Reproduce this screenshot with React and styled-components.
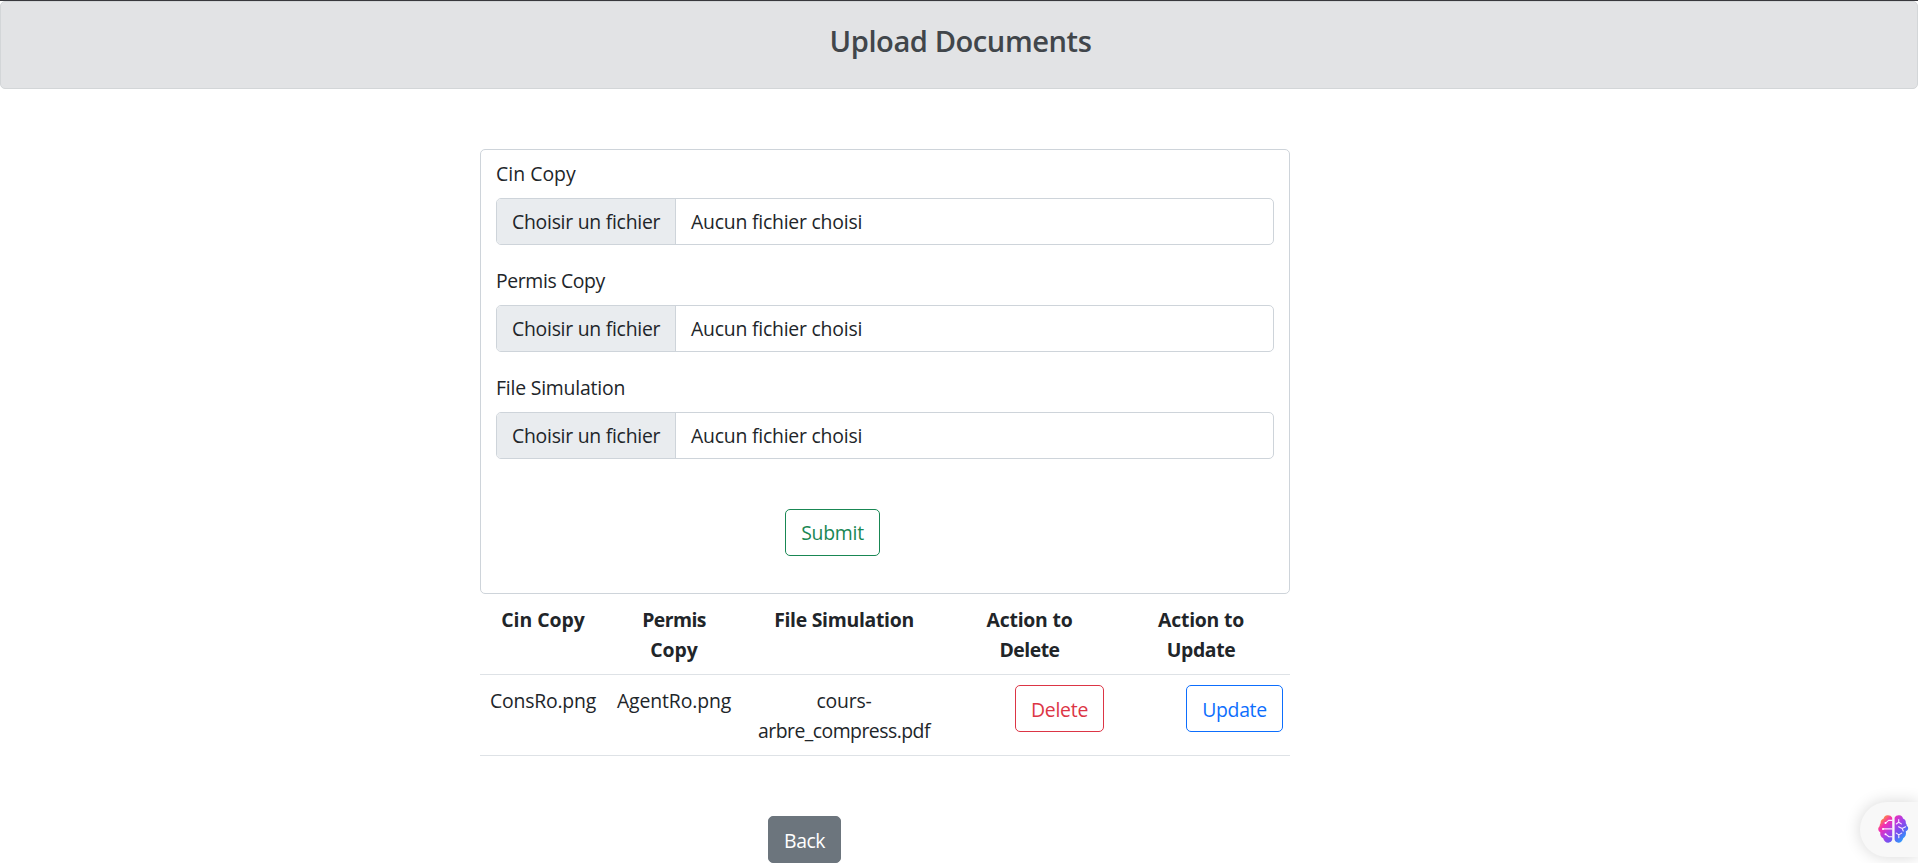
import React from 'react';
import styled, { createGlobalStyle } from 'styled-components';

const GlobalStyle = createGlobalStyle`
  *, *::before, *::after { box-sizing: border-box; }
  body {
    margin: 0;
    background: #fff;
    color: #212529;
    font-family: 'Segoe UI', 'Open Sans', 'Noto Sans', sans-serif;
    font-size: 19.4px;
    line-height: 30px;
  }
`;

const Page = styled.div`
  height: 863px;
  overflow: hidden;
  border-top: 1px solid #38383d;
`;

const Banner = styled.header`
  height: 88px;
  padding: 21px 18px 0 21px;
  border: 1px solid #d3d6d8;
  border-radius: 5px;
  background: #e2e3e5;
  color: #41464b;
  text-align: center;
`;

const Title = styled.h4`
  margin: 0;
  font-size: 29.1px;
  font-weight: 600;
  line-height: 36px;
  letter-spacing: -0.44px;
`;

const Main = styled.main`
  display: flex;
  flex-direction: column;
  width: 810px;
  margin: 60px 0 0 480px;
`;

const Text = styled.span`
  letter-spacing: ${(p) => p.$track || 0}px;
  white-space: nowrap;
`;

const UploadForm = styled.form`
  display: flex;
  flex-direction: column;
  gap: 20px;
  height: 445px;
  padding: 8px 15px;
  border: 1px solid #ced4da;
  border-radius: 5px;
`;

const Field = styled.div`
  display: flex;
  flex-direction: column;
  gap: 10px;
`;

const Label = styled.label`
  height: 30px;
  padding-top: 1px;
`;

const FileInput = styled.div`
  display: flex;
  height: 47px;
  overflow: hidden;
  border: 1px solid #ced4da;
  border-radius: 5px;
`;

const FileButton = styled.span`
  width: 179px;
  padding: 8px 0 0 15px;
  border-right: 1px solid #ced4da;
  background: #e9ecef;
`;

const FileName = styled.span`
  padding: 8px 15px 0;
`;

const palette = {
  success: ['#198754', 'transparent', '#198754'],
  danger: ['#dc3545', 'transparent', '#dc3545'],
  primary: ['#0d6efd', 'transparent', '#0d6efd'],
  secondary: ['#fff', '#6c757d', '#6c757d'],
};

const Button = styled.button`
  flex: none;
  width: ${(p) => p.$width}px;
  height: 47px;
  padding: ${(p) => (p.$low ? 3 : 1)}px 0 0;
  border: 1px solid ${(p) => palette[p.$variant][2]};
  border-radius: 5px;
  background: ${(p) => palette[p.$variant][1]};
  color: ${(p) => palette[p.$variant][0]};
  font: inherit;
  line-height: 30px;
`;

const SubmitRow = styled.div`
  display: flex;
  padding: 30px 0 0 289px;
`;

const Table = styled.table`
  width: 810px;
  table-layout: fixed;
  border-collapse: separate;
  border-spacing: 0;
  text-align: center;
`;

const Col = styled.col`
  width: ${(p) => p.$width}px;
`;

const HeadCell = styled.th`
  height: 81px;
  padding: 11px 1px 9px 0;
  border-bottom: 1px solid #dee2e6;
  font-weight: 700;
  vertical-align: top;
`;

const Line = styled(Text)`
  display: block;
`;

const Cell = styled.td`
  height: 81px;
  padding: 11px 1px 9px 0;
  border-bottom: 1px solid #dee2e6;
  vertical-align: top;
`;

const ActionCell = styled(Cell)`
  padding: 10px 0 0 ${(p) => p.$indent}px;
  text-align: left;
`;

const Footer = styled.div`
  display: flex;
  padding: 60px 0 0 288px;
`;

const Assistant = styled.aside`
  position: fixed;
  right: 0;
  top: 802px;
  display: flex;
  align-items: center;
  width: 58px;
  height: 55px;
  padding: 0 0 2px 18px;
  border-radius: 28px 0 0 28px;
  background: #f8f8f8;
  box-shadow: 0 0 16px rgba(0, 0, 0, 0.16);
`;

const FIELDS = [
  ['Cin Copy', 0.03],
  ['Permis Copy', -0.38],
  ['File Simulation', -0.2],
];

const COLUMNS = [
  { width: 127, lines: [['Cin Copy', -0.03]] },
  { width: 135, lines: [['Permis', -0.55], ['Copy', -0.04]] },
  { width: 205, lines: [['File Simulation', -0.29]] },
  { width: 166, lines: [['Action to', -0.22], ['Delete', -0.5]] },
  { width: 177, lines: [['Action to', -0.22], ['Update', -0.37]] },
];

const FILES = [
  [['ConsRo.png', -0.2]],
  [['AgentRo.png', -0.12]],
  [['cours-', -0.2], ['arbre_compress.pdf', -0.52]],
];

function Lines({ lines }) {
  return lines.map(([text, track]) => (
    <Line key={text} $track={track}>{text}</Line>
  ));
}

function BrainIcon() {
  return (
    <svg width="31" height="30" viewBox="0 0 31 30" fill="none">
      <defs>
        <linearGradient id="brain" x1="4" y1="3" x2="27" y2="26" gradientUnits="userSpaceOnUse">
          <stop offset="0" stopColor="#ff9a2e" />
          <stop offset="0.22" stopColor="#f52fb0" />
          <stop offset="0.5" stopColor="#a83fe8" />
          <stop offset="0.72" stopColor="#6758f0" />
          <stop offset="1" stopColor="#25a7ff" />
        </linearGradient>
      </defs>
      <path
        fill="url(#brain)"
        d="M14.2 3.8C13.4 1.6 11.2 1 9.4 1.2 7.3 1.3 6 2.7 5.7 4.4 3.6 5 2.5 6.8 2.6 9.2 1.8 10.3 1.6 11.2 1.7 12 .5 13.2.1 14.3.3 15.5.5 17 1.3 17.8 2.3 18.3 1.9 21 2.8 23.2 5.2 24.2 5.8 27 8 28.8 10.3 28.7 12.4 28.6 13.8 27.3 14.2 25.6Z"
      />
      <path
        fill="url(#brain)"
        d="M16.6 3.8C17.4 1.6 19.5 1 21.2 1.2 23.4 1.3 24.7 2.7 25 4.4 27 5.1 28.2 6.8 27.8 9.2 28.6 10.1 28.9 11 28.7 11.8 30 12.6 30.5 14 30 15.3 29.6 16.4 28.6 17.1 27.8 17.3 28.5 20.4 27.5 23 25.2 24.2 24.6 27 22.7 28.8 20.3 28.7 18.3 28.6 17 27.3 16.6 25.6Z"
      />
      <g stroke="#fbe9ff" strokeWidth="1.1" strokeLinecap="round" strokeLinejoin="round">
        <path d="M14.2 6.4H10.6L7.8 8.8M14.2 14.9H5.2M14.2 22.8H11L7.8 20.4" />
        <path d="M20.7 5.6V8.2L18.3 10M20.7 8.2L23.4 9.9M20.6 12.7L24.1 14.5L25.3 17M24.1 14.5L27.6 12.8M18.3 19.1L20.8 20.9L23.7 19.1M20.8 20.9V23.8" />
      </g>
      <g fill="#fff">
        <circle cx="7.5" cy="9" r="1" />
        <circle cx="5" cy="14.9" r="1" />
        <circle cx="7.5" cy="20.3" r="1" />
      </g>
    </svg>
  );
}

export default function App() {
  return (
    <>
      <GlobalStyle />
      <Page>
        <Banner>
          <Title>Upload Documents</Title>
        </Banner>
        <Main>
          <UploadForm>
            {FIELDS.map(([label, track]) => (
              <Field key={label}>
                <Label><Text $track={track}>{label}</Text></Label>
                <FileInput>
                  <FileButton><Text $track={-0.26}>Choisir un fichier</Text></FileButton>
                  <FileName><Text $track={-0.22}>Aucun fichier choisi</Text></FileName>
                </FileInput>
              </Field>
            ))}
            <SubmitRow>
              <Button type="button" $variant="success" $width={95}>
                <Text $track={-0.25}>Submit</Text>
              </Button>
            </SubmitRow>
          </UploadForm>
          <Table>
            <colgroup>
              {COLUMNS.map((c, i) => <Col key={i} $width={c.width} />)}
            </colgroup>
            <thead>
              <tr>
                {COLUMNS.map((c, i) => (
                  <HeadCell key={i}><Lines lines={c.lines} /></HeadCell>
                ))}
              </tr>
            </thead>
            <tbody>
              <tr>
                {FILES.map((lines, i) => (
                  <Cell key={i}><Lines lines={lines} /></Cell>
                ))}
                <ActionCell $indent={68}>
                  <Button $variant="danger" $width={89} $low><Text $track={-0.23}>Delete</Text></Button>
                </ActionCell>
                <ActionCell $indent={73}>
                  <Button $variant="primary" $width={97} $low><Text $track={-0.31}>Update</Text></Button>
                </ActionCell>
              </tr>
            </tbody>
          </Table>
          <Footer>
            <Button $variant="secondary" $width={73} $low><Text $track={-0.5}>Back</Text></Button>
          </Footer>
        </Main>
      </Page>
      <Assistant><BrainIcon /></Assistant>
    </>
  );
}
